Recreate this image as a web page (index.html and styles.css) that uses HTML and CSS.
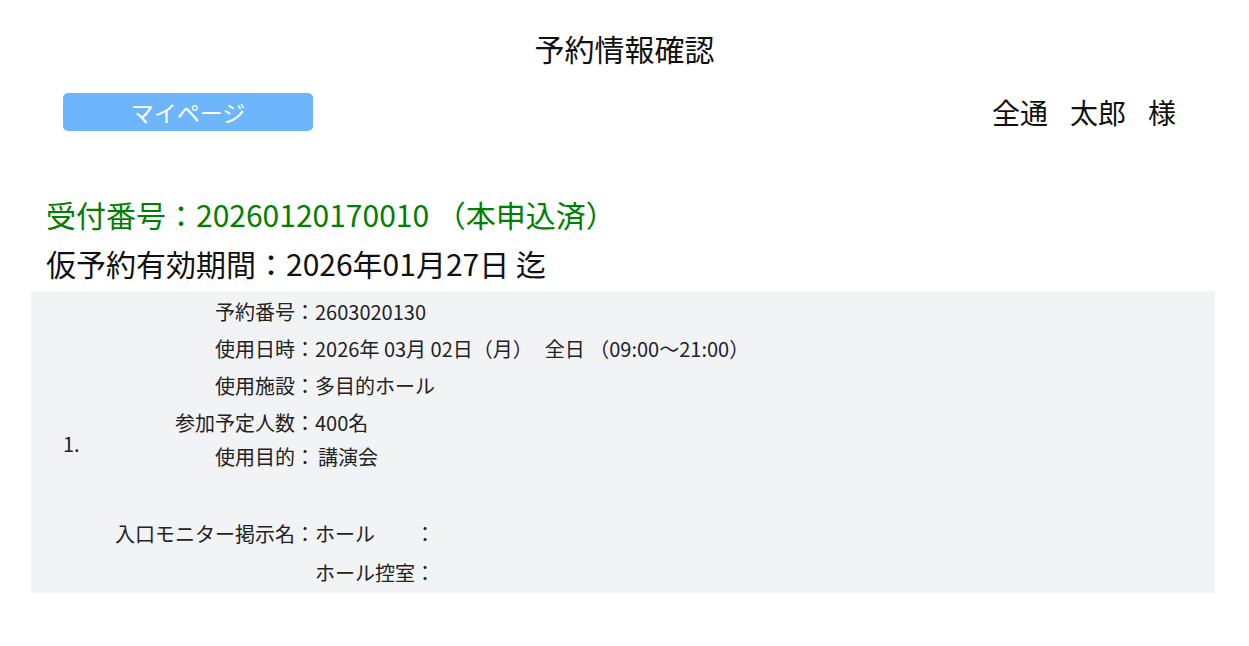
FILE: index.html
```html
<!DOCTYPE html>
<html lang="ja">
<head>
<meta charset="utf-8">
<title>予約情報確認</title>
<link rel="stylesheet" href="styles.css">
</head>
<body>
<h1 class="title">予約情報確認</h1>
<div class="topbar">
  <button class="mypage" type="button">マイページ</button>
  <div class="user"><span>全通</span><span class="sp">太郎</span><span class="sp">様</span></div>
</div>
<p class="receipt">受付番号：20260120170010 （本申込済）</p>
<p class="expiry">仮予約有効期間：2026年01月27日 迄</p>
<section class="panel">
  <div class="num">1.</div>
  <dl class="details">
    <dt>予約番号：</dt><dd>2603020130</dd>
    <dt>使用日時：</dt><dd>2026年 03月 02日（月）<span class="gap"></span>全日 （09:00～21:00）</dd>
    <dt>使用施設：</dt><dd>多目的ホール</dd>
    <dt>参加予定人数：</dt><dd>400名</dd>
    <dt class="purpose">使用目的：</dt><dd class="purpose purpose-val">講演会</dd>
    <dt class="monitor">入口モニター掲示名：</dt><dd class="monitor">ホール　　：</dd>
    <dt class="last"></dt><dd class="last">ホール控室：</dd>
  </dl>
</section>
</body>
</html>
```
FILE: styles.css
```css
html, body {
  margin: 0;
  padding: 0;
  background: #ffffff;
  color: #111111;
  font-family: "Noto Sans CJK JP", "Noto Sans", sans-serif;
}

.title {
  margin: 0;
  padding-top: 26px;
  font-size: 30px;
  font-weight: 400;
  line-height: 45px;
  text-align: center;
  color: #111111;
}

.topbar {
  display: flex;
  align-items: center;
  justify-content: space-between;
  margin-top: 22px;
  padding: 0 73px 0 63px;
}

.mypage {
  width: 250px;
  height: 38px;
  border: none;
  border-radius: 5px;
  background: #6db6fc;
  color: #ffffff;
  font-family: "Noto Sans CJK JP", sans-serif;
  font-size: 23px;
  line-height: 38px;
  padding: 0;
}

.user {
  font-size: 28px;
  line-height: 38px;
  color: #111111;
}

.user .sp {
  margin-left: 22px;
}

.receipt {
  margin: 59px 0 0 46px;
  font-size: 30px;
  line-height: 49px;
  color: #008000;
}

.expiry {
  margin: 0 0 0 46px;
  font-size: 30px;
  line-height: 49px;
  color: #111111;
}

.panel {
  display: flex;
  margin: 3px 34px 0 31px;
  padding-top: 2px;
  background: #f2f3f5;
  color: #222222;
  font-size: 20px;
}

.num {
  width: 52px;
  padding-left: 32px;
  align-self: center;
  line-height: 37px;
}

.details {
  display: grid;
  grid-template-columns: 200px 1fr;
  margin: 0;
  flex: 1;
}

.details dt {
  text-align: right;
  line-height: 37px;
}

.details dd {
  margin: 0;
  line-height: 37px;
  white-space: pre;
}

.gap {
  display: inline-block;
  width: 12px;
}

.details .purpose {
  line-height: 31px;
}

.details .purpose-val {
  padding-left: 3px;
}

.details .monitor {
  margin-top: 42px;
  line-height: 39px;
}

.details .last {
  line-height: 40px;
}
```
